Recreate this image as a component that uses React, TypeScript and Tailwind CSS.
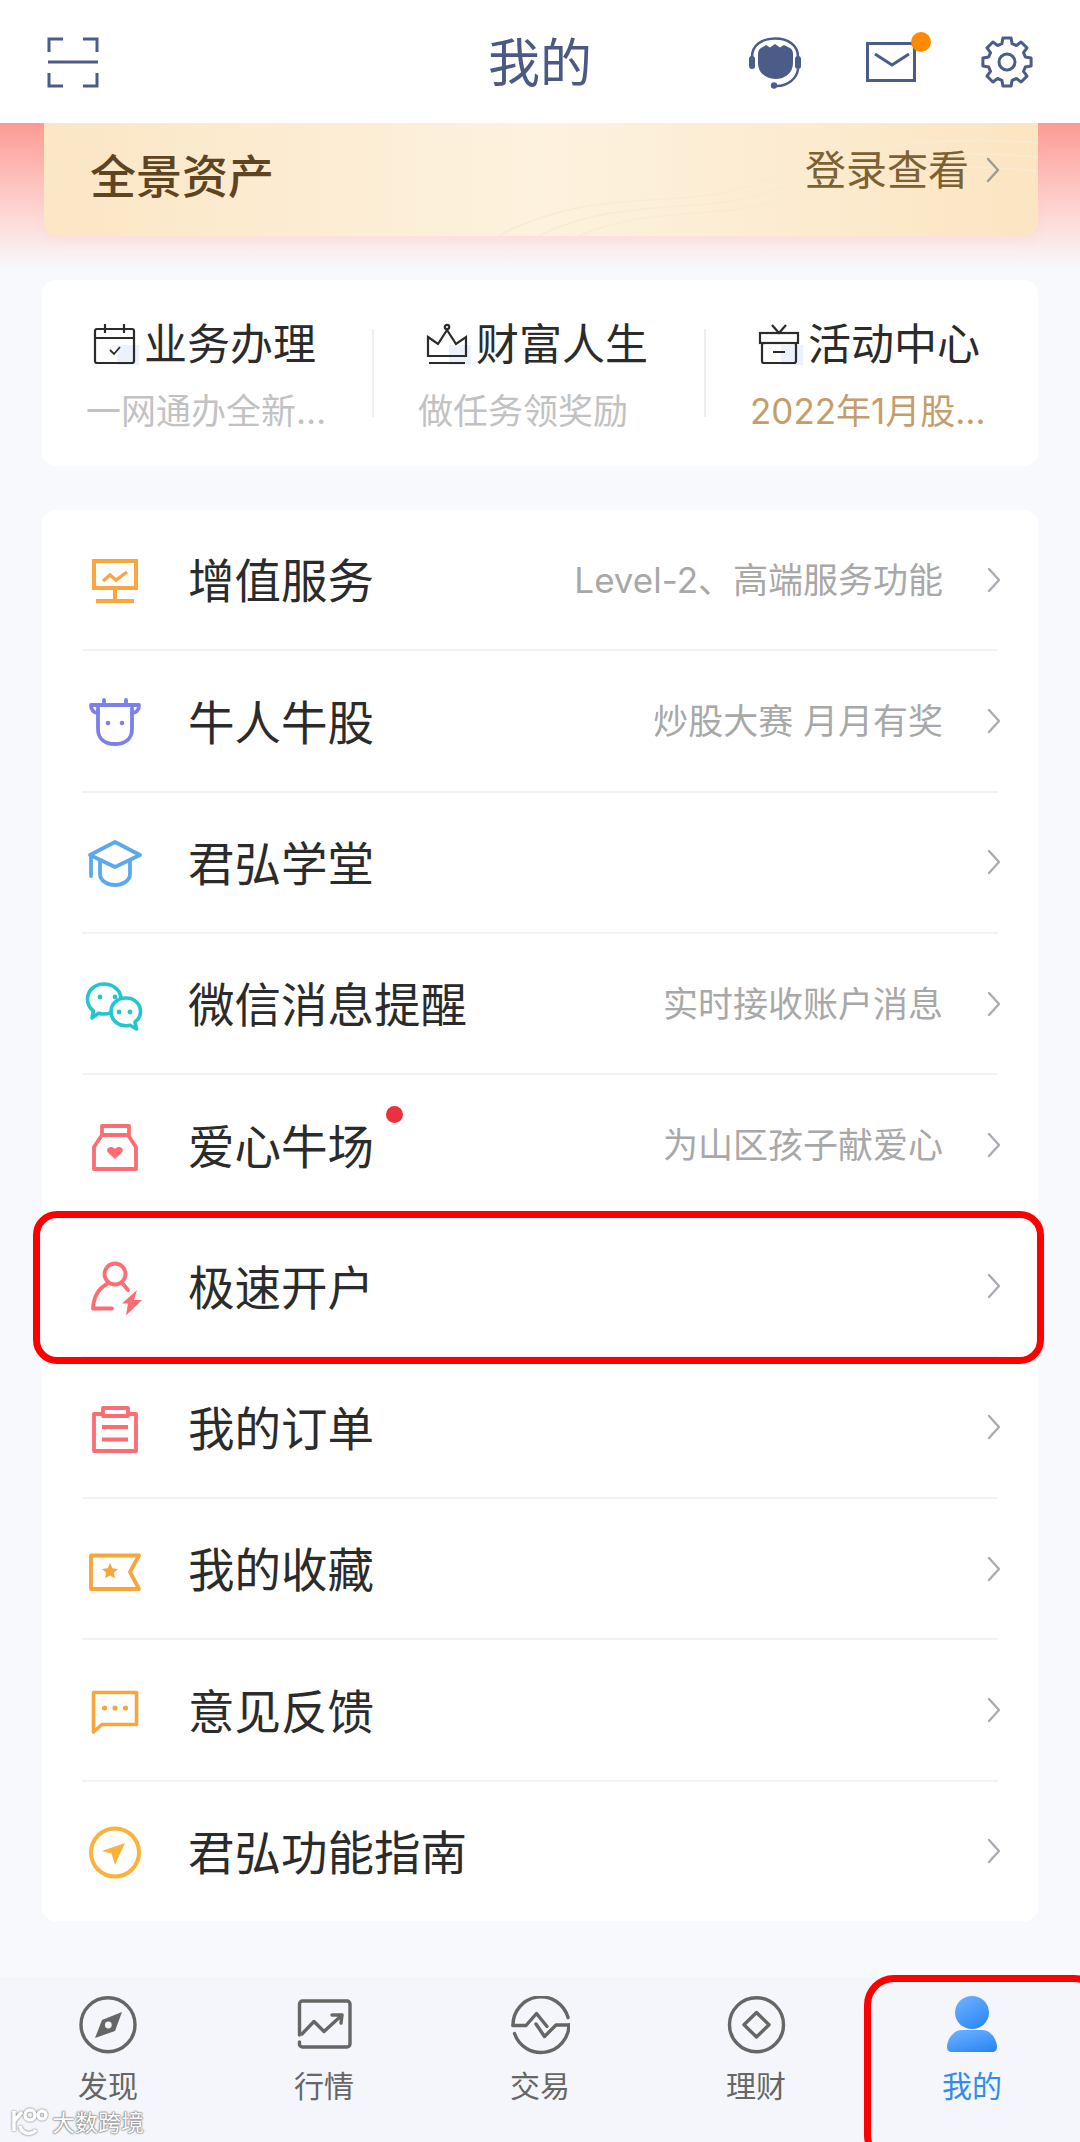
import type { ReactNode } from 'react'

const NAVY = '#4c5c88'
const RED = '#fb6d72'
const ORANGE = '#f8a63c'
const GREY = '#666666'

function Svg({ size = 60, h, children }: { size?: number; h?: number; children: ReactNode }) {
  return (
    <svg
      width={size}
      height={h ?? size}
      viewBox={`0 0 ${size} ${h ?? size}`}
      fill="none"
      strokeLinecap="round"
      strokeLinejoin="round"
      className="shrink-0"
    >
      {children}
    </svg>
  )
}

// 8 toothed gear outline, centred on 26,26
function gearPath() {
  const pts: string[] = []
  for (let i = 0; i < 8; i++) {
    const a = (i * Math.PI) / 4 - Math.PI / 2
    const at = (r: number, d: number) =>
      `${(26 + r * Math.cos(a + d)).toFixed(1)} ${(26 + r * Math.sin(a + d)).toFixed(1)}`
    pts.push(at(19, -0.27), at(24.5, -0.17), at(24.5, 0.17), at(19, 0.27))
  }
  return `M${pts.join('L')}Z`
}

const rowIcons: Record<string, ReactNode> = {
  monitor: (
    <Svg>
      <g stroke="#f9a63f" strokeWidth="4" strokeLinecap="butt" strokeLinejoin="miter">
        <rect x="9" y="11" width="42" height="27" />
        <path d="M30 38v13M11 51h38" />
        <path d="M18 31l7-6 6 5 11-8" strokeWidth="3.4" />
      </g>
    </Svg>
  ),
  cow: (
    <Svg>
      <g stroke="#7b80ea" strokeWidth="3.8">
        <path d="M13 17v21c0 10 7 15 17 15s17-5 17-15V17" />
        <path d="M6 14h48c0 5-3 8-7 8M6 14c0 5 3 8 7 8M19 9v5M41 9v5" />
      </g>
      <circle cx="23" cy="32" r="2.3" fill="#7b80ea" />
      <circle cx="37" cy="32" r="2.3" fill="#7b80ea" />
    </Svg>
  ),
  cap: (
    <Svg>
      <g stroke="#5aa9ee" strokeWidth="3.8">
        <path d="M30 10l25 13-25 12L5 23z" />
        <path d="M15 29v13c0 7 8 11 15 11s15-4 15-11V29" />
        <path d="M6 24v20" />
      </g>
    </Svg>
  ),
  wechat: (
    <Svg>
      <g stroke="#22c6cf" strokeWidth="3.6">
        <path d="M19 10c9.5 0 17 6.500 17 15 0 8.500-7.500 15-17 15-2 0-4-.3-5.500-.8L7 44l1.500-7C4.500 34 2.500 30 2.500 25c0-8.500 7-15 16.500-15z" />
        <path d="M41 24c8.500 0 14.500 6 14.500 13.500 0 4.500-2 8-5.500 10.500l1.500 7-6.500-3.800c-1.300.3-2.800.5-4 .5-8.500 0-15-6-15-14.200C26 30 32.500 24 41 24z" fill="#fff" />
      </g>
      <circle cx="15" cy="23" r="2.4" fill="#22c6cf" />
      <circle cx="30" cy="23" r="2.4" fill="#22c6cf" />
      <circle cx="34" cy="38" r="2.4" fill="#22c6cf" />
      <circle cx="45" cy="38" r="2.4" fill="#22c6cf" />
    </Svg>
  ),
  bag: (
    <Svg>
      <g stroke={RED} strokeWidth="3.8" strokeLinecap="butt">
        <path d="M17 20L9 32v22h42V32l-8-12z" />
        <path d="M17 11h27v9H17z" />
      </g>
      <path d="M30 44l-7-6.500c-3-3.500 2.500-8 7-3.500 4.500-4.500 10 0 7 3.500z" fill={RED} />
    </Svg>
  ),
  user: (
    <Svg>
      <g stroke={RED} strokeWidth="3.8">
        <circle cx="30" cy="18" r="10.5" />
        <path d="M22 28C13 33 8.500 42 8 52.500h19M38 28l5 6" />
      </g>
      <path d="M52 34L37 47.500h6L41 59.500 57 44h-8z" fill={RED} />
    </Svg>
  ),
  order: (
    <Svg>
      <g stroke={RED} strokeWidth="3.8" strokeLinecap="butt">
        <path d="M17 17H9v37h42V17h-8" />
        <path d="M18 11h25v8H18zM17 30h26M17 42.500h26" />
      </g>
    </Svg>
  ),
  ticket: (
    <Svg>
      <path d="M6 16.500h48L45 33l9 17H6z" stroke={ORANGE} strokeWidth="3.8" strokeLinecap="butt" />
      <path d="M25 24l2.400 5.300 5.600.6-4.200 3.800 1.200 5.600-5-2.900-5 2.900 1.200-5.600-4.200-3.800 5.600-.6z" fill={ORANGE} />
    </Svg>
  ),
  comment: (
    <Svg>
      <path d="M8.500 12.500h43v32H17L8.500 52z" stroke={ORANGE} strokeWidth="3.6" strokeLinecap="butt" />
      <circle cx="19.5" cy="28" r="2.6" fill={ORANGE} />
      <circle cx="30" cy="28" r="2.6" fill={ORANGE} />
      <circle cx="40.5" cy="28" r="2.6" fill={ORANGE} />
    </Svg>
  ),
  guide: (
    <Svg>
      <circle cx="30" cy="31.5" r="24" stroke="#f9b33a" strokeWidth="4" />
      <path d="M40 22L17 30l9.500 2.600L30 44z" fill="#f9b33a" />
    </Svg>
  ),
}

const rows = [
  { icon: 'monitor', title: '增值服务', sub: 'Level-2、高端服务功能' },
  { icon: 'cow', title: '牛人牛股', sub: '炒股大赛 月月有奖' },
  { icon: 'cap', title: '君弘学堂', sub: '' },
  { icon: 'wechat', title: '微信消息提醒', sub: '实时接收账户消息' },
  { icon: 'bag', title: '爱心牛场', sub: '为山区孩子献爱心', dot: true },
  { icon: 'user', title: '极速开户', sub: '' },
  { icon: 'order', title: '我的订单', sub: '' },
  { icon: 'ticket', title: '我的收藏', sub: '' },
  { icon: 'comment', title: '意见反馈', sub: '' },
  { icon: 'guide', title: '君弘功能指南', sub: '' },
]

function Chevron({ color = '#a9acb3' }: { color?: string }) {
  return (
    <svg width="14" height="26" viewBox="0 0 14 26" fill="none" className="shrink-0">
      <path d="M2 2l10 11L2 24" stroke={color} strokeWidth="2.4" strokeLinecap="round" strokeLinejoin="round" />
    </svg>
  )
}

function ServiceIcon({ kind }: { kind: 'calendar' | 'crown' | 'gift' }) {
  return (
    <Svg size={46} h={42}>
      <rect x="24" y="22" width="22" height="20" fill="#e6eefd" opacity="0.8" />
      <g stroke="#2b2b2b" strokeWidth="2.2" strokeLinecap="butt" strokeLinejoin="miter">
        {kind === 'calendar' && (
          <>
            <rect x="2" y="6" width="39" height="34" rx="2" />
            <path d="M2 15h39M12 1v9M31 1v9" />
            <path d="M17 27l4 4 6-7" strokeWidth="1.8" />
          </>
        )}
        {kind === 'crown' && (
          <>
            <path d="M3 14l10 7 9-14 9 14 10-7v19H3z" />
            <circle cx="22" cy="4" r="2.2" />
            <path d="M4 40h36" />
          </>
        )}
        {kind === 'gift' && (
          <>
            <rect x="3" y="10" width="38" height="10" />
            <rect x="5" y="20" width="34" height="20" rx="2" />
            <path d="M15 2l7 8 7-8M16 29h12" />
          </>
        )}
      </g>
    </Svg>
  )
}

const services = [
  { kind: 'calendar' as const, title: '业务办理', sub: '一网通办全新…', subColor: 'text-[#c2c2c2]' },
  { kind: 'crown' as const, title: '财富人生', sub: '做任务领奖励', subColor: 'text-[#c2c2c2]' },
  { kind: 'gift' as const, title: '活动中心', sub: '2022年1月股…', subColor: 'text-[#c59d6b]' },
]

const tabIcons: Record<string, ReactNode> = {
  compass: (
    <Svg>
      <circle cx="30" cy="28.7" r="27" stroke={GREY} strokeWidth="3.4" />
      <path d="M44 16L37 35 17 42 24 24z" fill={GREY} />
      <circle cx="30.3" cy="29" r="3.4" fill="#f4f6fb" />
    </Svg>
  ),
  chart: (
    <Svg>
      <g stroke={GREY} strokeWidth="3.4">
        <path d="M5.500 39V8a3 3 0 0 1 3-3H53a3 3 0 0 1 3 3v40a3 3 0 0 1-3 3H9a3 3 0 0 1-3.500-3.500V46" />
        <path d="M8 38l12-12.500L30 35.500 48 19M38 19h10l-1 8" />
      </g>
    </Svg>
  ),
  swap: (
    <Svg>
      <g stroke={GREY} strokeWidth="3.4">
        <path d="M3 29.500A28 28 0 0 1 58 21.500" />
        <path d="M59 29A28 28 0 0 1 4.500 37.500" />
        <path d="M3 29.500H16L26.500 17.500 37 30.500" />
        <path d="M26 28L34.500 40.500 46 29H59" />
      </g>
    </Svg>
  ),
  coin: (
    <Svg>
      <circle cx="30.5" cy="28.7" r="27" stroke={GREY} strokeWidth="3.4" />
      <path d="M30.500 16.500L43 28.700 30.500 41 18 28.700z" stroke={GREY} strokeWidth="3.4" />
    </Svg>
  ),
  person: (
    <svg width="60" height="60" viewBox="0 0 60 60" className="shrink-0">
      <defs>
        <linearGradient id="personFill" x1="0.2" y1="0" x2="0.8" y2="1">
          <stop offset="0" stopColor="#6db0ff" />
          <stop offset="1" stopColor="#2b86f5" />
        </linearGradient>
      </defs>
      <ellipse cx="30" cy="16.5" rx="17" ry="16.5" fill="url(#personFill)" />
      <path d="M20 34h20c9 0 15 10 15 17 0 3-2 5-5 5H10c-3 0-5-2-5-5 0-7 6-17 15-17z" fill="url(#personFill)" />
    </svg>
  ),
}

const tabs = [
  { icon: 'compass', label: '发现' },
  { icon: 'chart', label: '行情' },
  { icon: 'swap', label: '交易' },
  { icon: 'coin', label: '理财' },
  { icon: 'person', label: '我的', active: true },
]

export default function App() {
  return (
    <div className="relative flex h-[2142px] w-[1080px] flex-col overflow-hidden bg-[#f7f9fd] font-['Inter','Noto_Sans_CJK_SC',sans-serif]">
      <header className="grid h-[123px] shrink-0 grid-cols-[1fr_auto_1fr] items-center bg-white px-[47px]">
        <svg width="52" height="52" viewBox="0 0 52 52" fill="none" stroke={NAVY} strokeWidth="3">
          <path d="M16 3H2v13M36 3h14v13M16 50H2V37M36 50h14V37" />
          <path d="M1 26h50" />
        </svg>
        <span className="pt-[5px] text-[52px] leading-none text-[#4a5a85]">我的</span>
        <div className="flex items-center justify-end gap-[65px]">
          <svg width="52" height="52" viewBox="0 0 52 52" fill="none" className="mt-[2px]">
            <path d="M3 20C3 8 13 1.500 26 1.500S49 8 49 20" stroke={NAVY} strokeWidth="2.5" />
            <path d="M9 18c0-4 1-6 3-7l5-3 4 2.500L26 7l5 3.500L35 8l6 3c2 1 3 3 3 7v8c0 10-8 16-17.500 16S9 36 9 26z" fill={NAVY} />
            <rect x="0" y="19" width="6" height="13" rx="3" fill={NAVY} />
            <rect x="46" y="19" width="6" height="13" rx="3" fill={NAVY} />
            <path d="M49 32c-1 10-11 17-21 17" stroke={NAVY} strokeWidth="2.5" />
            <circle cx="25" cy="48.5" r="3.2" fill={NAVY} />
          </svg>
          <div className="relative">
            <svg width="50" height="40" viewBox="0 0 50 40" fill="none" stroke={NAVY} strokeWidth="3" className="block">
              <path d="M1.500 1.500h47v37h-47z" />
              <path d="M9 12l17 11 17-11" />
            </svg>
            <span className="absolute right-[-15px] top-[-10px] size-[20px] rounded-full bg-[#ff8a00]" />
          </div>
          <svg width="52" height="52" viewBox="0 0 52 52" fill="none" stroke={NAVY} strokeWidth="3" strokeLinejoin="round">
            <path d={gearPath()} />
            <circle cx="26" cy="26" r="8" />
          </svg>
        </div>
      </header>

      <main className="flex-1">
        <section className="h-[147px] bg-gradient-to-b from-[#fb9a94] via-[#fdd5d2] via-60% to-[#f8f9fd] pl-[44px] pr-[42px]">
          <div className="relative flex h-[113px] justify-between overflow-hidden rounded-b-[14px] bg-gradient-to-r from-[#fbe6c5] via-[#fdf2de] to-[#fbe5c2] pl-[46px] pr-[38px] pt-[30px] shadow-[0_4px_12px_rgba(240,190,170,0.12)]">
            <svg width="560" height="113" viewBox="0 0 560 113" fill="none" stroke="#f8ebd4" strokeWidth="1.5" className="absolute right-0 top-0">
              <path d="M20 113C120 60 200 90 280 60S430 10 560 20" />
              <path d="M60 113C150 70 220 95 300 66S440 24 560 34" />
              <path d="M100 113C180 80 240 100 320 72S450 38 560 48" />
            </svg>
            <span className="relative text-[46px] font-medium leading-[46px] text-[#5e4420]">全景资产</span>
            <span className="relative -mt-[5px] flex h-[44px] items-center gap-[17px] text-[41px] leading-none text-[#7c6132]">
              登录查看
              <Chevron color="#9a9a9a" />
            </span>
          </div>
        </section>

        <section className="mx-[42px] mt-[10px] flex h-[186px] items-center rounded-[14px] bg-white pt-[5px]">
          {services.map((s, i) => (
            <div key={s.title} className="contents">
              {i > 0 && <span className="-mt-[5px] h-[88px] w-[2px] shrink-0 bg-[#eeeef0]" />}
              <div className={`flex flex-col gap-[24px] ${i < 2 ? 'w-[330px]' : 'flex-1'}`}>
                <div className="ml-[51px] flex items-center gap-[5px] text-[43px] leading-[46px] text-[#2b2b2b]">
                  <ServiceIcon kind={s.kind} />
                  {s.title}
                </div>
                <span className={`ml-[44px] text-[35px] leading-[40px] ${s.subColor}`}>{s.sub}</span>
              </div>
            </div>
          ))}
        </section>

        <section className="mx-[42px] mt-[44px] flex h-[1411px] flex-col rounded-[14px] bg-white px-[40px]">
          {rows.map((r, i) => (
            <div
              key={r.title}
              className={`flex flex-1 items-center ${i < rows.length - 1 ? 'border-b-2 border-[#f2f2f4]' : ''}`}
            >
              <span className="ml-[3px] mr-[43px]">{rowIcons[r.icon]}</span>
              <span className="relative pt-[4px] text-[46.500px] leading-none text-[#2b2b2b]">
                {r.title}
                {r.dot && <span className="absolute right-[-29px] top-[-14px] size-[17px] rounded-full bg-[#e8323c]" />}
              </span>
              <span className="ml-auto mr-[44px] pt-[2px] text-[35px] leading-none text-[#a8a8a8]">{r.sub}</span>
              <span className="-mr-[3px]">
                <Chevron />
              </span>
            </div>
          ))}
        </section>
      </main>

      <nav className="grid h-[165px] shrink-0 grid-cols-5 bg-[#f4f6fb] pt-[19px]">
        {tabs.map(t => (
          <div key={t.label} className="flex flex-col items-center gap-[13px]">
            {tabIcons[t.icon]}
            <span className={`text-[30px] leading-[34px] ${t.active ? 'text-[#2f8cf0]' : 'text-[#666666]'}`}>{t.label}</span>
          </div>
        ))}
      </nav>

      {/* annotations and watermark on top of the screenshot */}
      <div className="absolute left-[33px] top-[1211px] h-[153px] w-[1011px] rounded-[24px] border-[7px] border-[#ff0000]" />
      <div className="absolute left-[864px] top-[1975px] h-[190px] w-[240px] rounded-[30px] border-[7px] border-[#ff0000]" />
      <div className="absolute left-[10px] top-[2106px] flex items-center gap-[4px] text-[23px] leading-none text-white [text-shadow:0_0_2px_#777777,0_0_2px_#777777,0_0_1px_#777777]">
        <svg width="38" height="34" viewBox="0 0 38 34" fill="none" stroke="#fff" strokeWidth="3.5" className="drop-shadow-[0_0_1px_#666666]">
          <path d="M4 5v20M4 15l8-9M10 20c2 9 12 9 16 4" />
          <circle cx="20" cy="9" r="5" />
          <circle cx="32" cy="9" r="4" />
        </svg>
        大数跨境
      </div>
    </div>
  )
}
